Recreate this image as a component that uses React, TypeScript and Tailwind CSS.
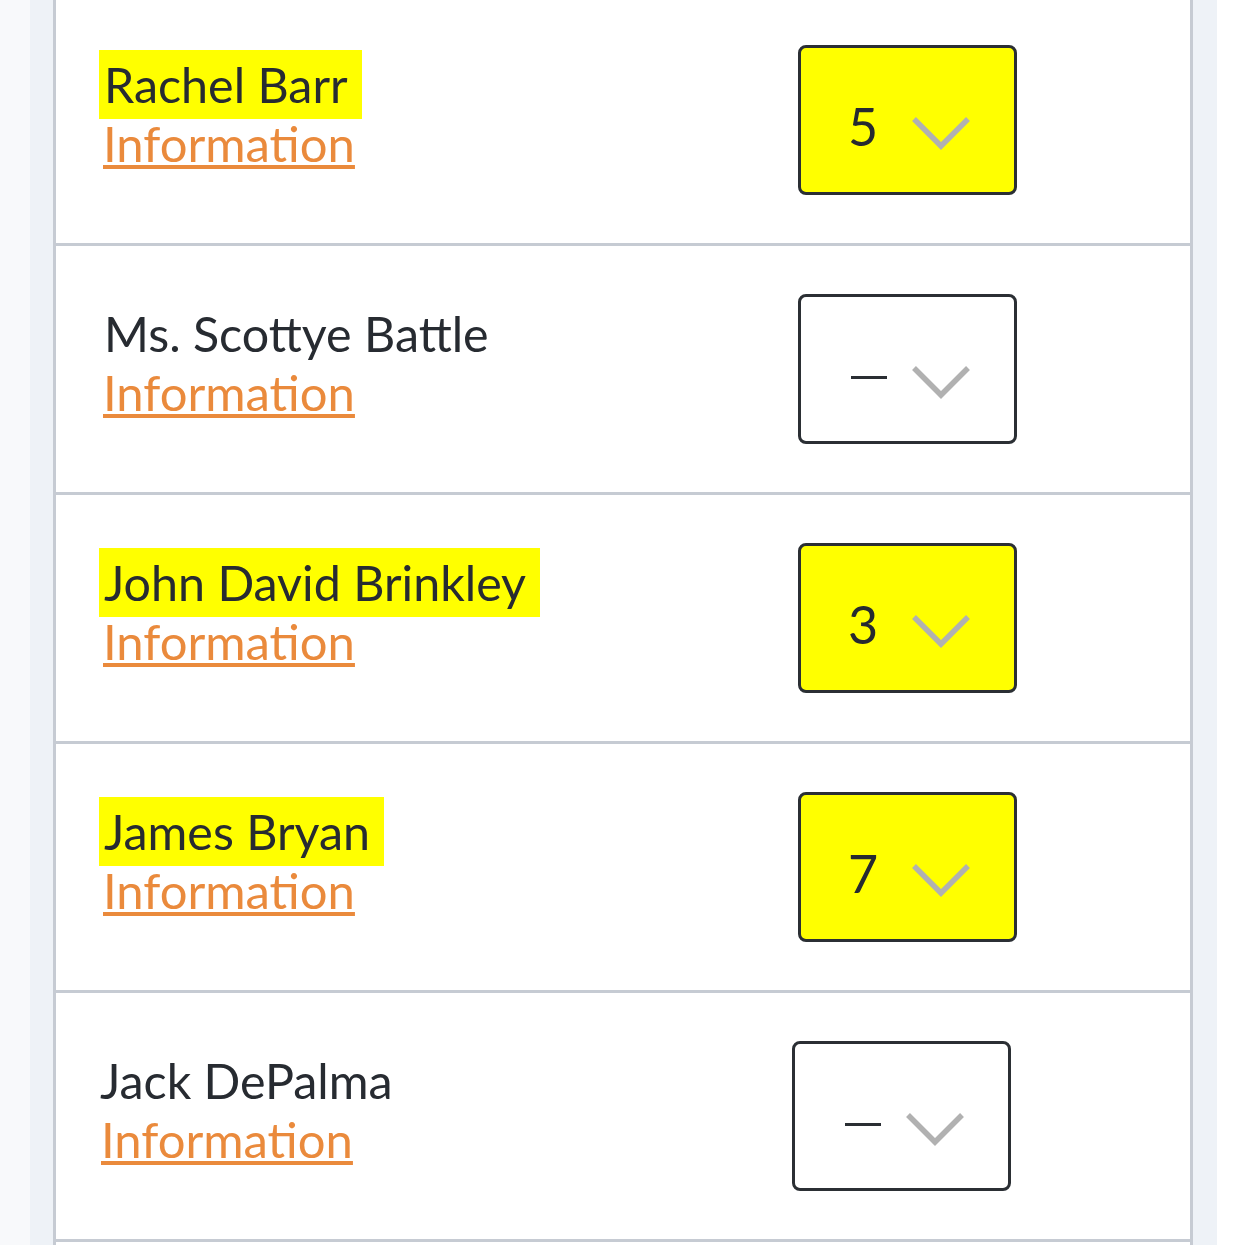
import { ReactNode } from 'react';

type Person = {
  name: string;
  rank: string | null;
};

const people: Person[] = [
  { name: 'Rachel Barr', rank: '5' },
  { name: 'Ms. Scottye Battle', rank: null },
  { name: 'John David Brinkley', rank: '3' },
  { name: 'James Bryan', rank: '7' },
  { name: 'Jack DePalma', rank: null },
];

function Chevron() {
  return (
    <svg width="60" height="36" viewBox="0 0 60 36" className="mt-[26px] shrink-0">
      <polyline
        points="3,4 30,31 57,4"
        fill="none"
        stroke="#b1b1b1"
        strokeWidth="5.5"
      />
    </svg>
  );
}

function RankSelect({ rank }: { rank: string | null }) {
  const picked = rank !== null;
  return (
    <div
      className={`flex h-[150px] w-[219px] shrink-0 items-center rounded-[8px] border-[3px] border-[#2b2f34] pl-[47px] ${
        picked ? 'bg-[#ffff00]' : 'bg-white'
      }`}
    >
      {picked ? (
        <span className="mt-[12px] w-[63px] text-[52px] leading-none text-[#262a30]">{rank}</span>
      ) : (
        <span className="mt-[16px] flex w-[63px] items-center pl-[3px]">
          <span className="h-[3px] w-[36px] bg-[#2a2e33]" />
        </span>
      )}
      <Chevron />
    </div>
  );
}

function Row({ person, shift }: { person: Person; shift?: boolean }): ReactNode {
  const picked = person.rank !== null;
  return (
    <div className="flex h-[249px] items-start border-b-[3px] border-[#c6cbd3]">
      <div className={`flex flex-1 flex-col items-start pt-[53px] ${shift ? 'pl-[39px]' : 'pl-[43px]'}`}>
        <span
          className={`py-[5px] pl-[5px] pr-[14px] text-[48.4px] leading-[59px] text-[#272b31] ${
            picked ? 'bg-[#ffff00]' : ''
          }`}
        >
          {person.name}
        </span>
        <a
          href="#"
          className={`text-[49px] leading-[48px] text-[#ea8a3c] underline decoration-[4px] underline-offset-[3px] ${
            shift ? 'ml-[6px]' : 'ml-[4px]'
          }`}
        >
          Information
        </a>
      </div>
      <div className={`mt-[48px] ${shift ? 'mr-[179px]' : 'mr-[173px]'}`}>
        <RankSelect rank={person.rank} />
      </div>
    </div>
  );
}

export default function App() {
  return (
    <div
      className="flex h-[1245px] w-[1242px] overflow-hidden bg-white"
      style={{ fontFamily: 'Lato, "Open Sans", sans-serif' }}
    >
      <div className="w-[30px] shrink-0 bg-[#f8f9fb]" />
      <div className="w-[23px] shrink-0 bg-[#eef2f7]" />
      <div className="-mt-[3px] w-[1140px] shrink-0 border-x-[3px] border-[#c6cbd3] bg-white">
        {people.map((p, i) => (
          <Row key={p.name} person={p} shift={i === people.length - 1} />
        ))}
      </div>
      <div className="w-[24px] shrink-0 bg-[#eef2f7]" />
      <div className="flex-1 bg-white" />
    </div>
  );
}
